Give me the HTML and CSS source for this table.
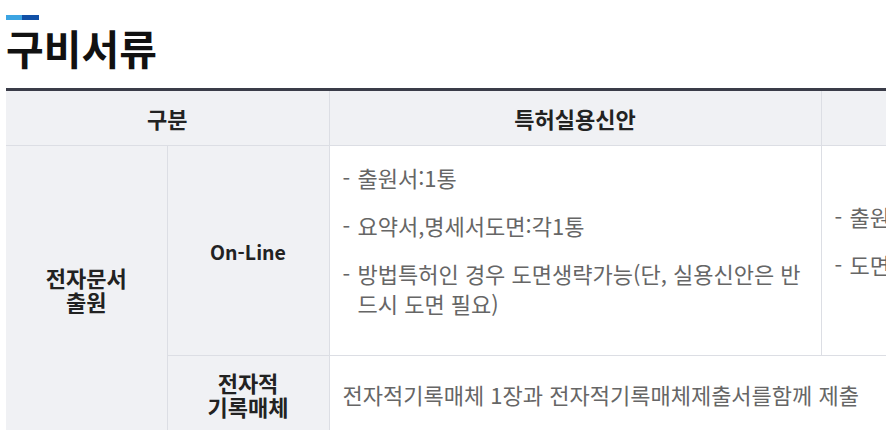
FILE: index.html
```html
<!DOCTYPE html>
<html lang="ko">
<head>
<meta charset="utf-8">
<title>구비서류</title>
<link rel="stylesheet" href="styles.css">
</head>
<body>
<div class="page">
  <div class="accent"><span class="accent-light"></span><span class="accent-dark"></span></div>
  <h2 class="title">구비서류</h2>
  <table class="docs">
    <colgroup>
      <col class="c1"><col class="c2"><col class="c3"><col class="c4">
    </colgroup>
    <thead>
      <tr>
        <th colspan="2">구분</th>
        <th>특허실용신안</th>
        <th>디자인</th>
      </tr>
    </thead>
    <tbody>
      <tr>
        <th rowspan="2">전자문서<br>출원</th>
        <th><span class="latin">On-Line</span></th>
        <td class="list-cell">
          <ul class="items">
            <li>출원서:1통</li>
            <li>요약서,명세서도면:각1통</li>
            <li>방법특허인 경우 도면생략가능(단, 실용신안은 반드시 도면 필요)</li>
          </ul>
        </td>
        <td class="list-cell">
          <ul class="items">
            <li>출원서:1통</li>
            <li>도면:1통</li>
          </ul>
        </td>
      </tr>
      <tr>
        <th>전자적<br>기록매체</th>
        <td colspan="2" class="single">전자적기록매체 1장과 전자적기록매체제출서를함께 제출</td>
      </tr>
    </tbody>
  </table>
</div>
</body>
</html>
```
FILE: styles.css
```css
html, body {
  margin: 0;
  padding: 0;
  background: #ffffff;
  overflow: hidden;
}
body {
  font-family: "Noto Sans CJK KR", "Noto Sans", sans-serif;
  color: #222;
}
.page {
  padding: 15px 0 0 6px;
}
.accent {
  display: flex;
  height: 5px;
}
.accent-light {
  width: 16px;
  background: #3ca4e2;
}
.accent-dark {
  width: 17px;
  background: #1150a6;
}
.title {
  margin: 0;
  font-size: 41px;
  line-height: 54px;
  font-weight: 700;
  color: #111;
}
.docs {
  margin-top: 14px;
  width: 1307px;
  table-layout: fixed;
  border-collapse: collapse;
  border-top: 3px solid #3a3c48;
}
.c1 { width: 161px; }
.c2 { width: 162px; }
.c3 { width: 492px; }
.c4 { width: 492px; }
.docs th {
  background: #f0f1f4;
  font-size: 22px;
  font-weight: 700;
  line-height: 24px;
  color: #222;
  padding: 15px 10px;
  border: 1px solid #dcdee4;
  text-align: center;
  vertical-align: middle;
}
.docs tbody th {
  padding: 14px 10px;
}
.docs th .latin {
  font-size: 19.5px;
}
.docs tr > :first-child {
  border-left: none;
}
.docs td {
  border: 1px solid #dcdee4;
  padding: 8px 12px 8px 13px;
  vertical-align: middle;
  font-size: 22px;
  line-height: 30px;
  color: #666;
}
.docs td.list-cell {
  padding-top: 16px;
  padding-bottom: 19px;
}
.items {
  list-style: none;
  margin: 0;
  padding: 0;
}
.items li {
  margin: 0 0 18px 0;
  padding-left: 15px;
  text-indent: -15px;
}
.items li::before {
  content: "-";
  display: inline-block;
  width: 15px;
  text-indent: 0;
}
```
